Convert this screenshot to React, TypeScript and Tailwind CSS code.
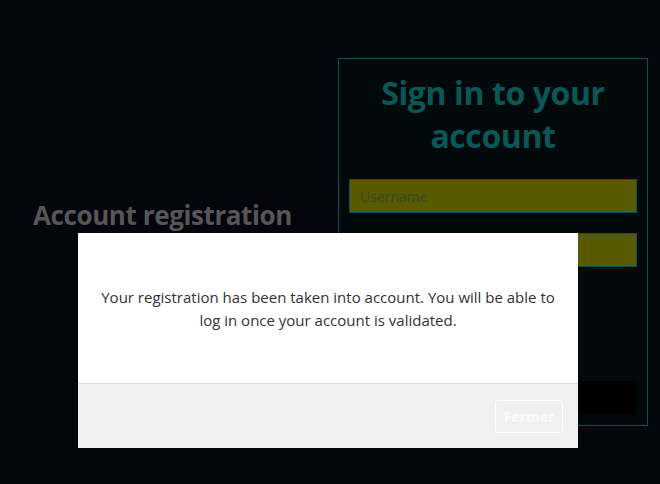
import React from "react";

export default function App() {
  const font = { fontFamily: '"Open Sans", "Noto Sans", sans-serif' };
  return (
    <div
      className="relative w-[660px] h-[484px] overflow-hidden bg-[#05050d] flex"
      style={font}
    >
      <div className="flex-1 pl-[33px] pt-[197px]">
        <h2 className="text-[26px] font-bold leading-[36px] text-[#565656] tracking-[-0.4px]">
          Account registration
        </h2>
      </div>
      <div className="mt-[58px] mr-[12px] w-[310px] h-[368px] border border-[#0e5256] bg-[#01090b] px-[10px] pt-[12px] flex flex-col">
        <h1 className="text-[32px] font-bold leading-[43px] text-center text-[#0b5757] tracking-[-0.4px]">
          Sign in to your account
        </h1>
        <div className="mt-[22px] h-[34px] border border-[#0e5256] bg-[#595900] flex items-center px-[10px] text-[14px] text-[#354826]">
          Username
        </div>
        <div className="mt-[20px] h-[34px] border border-[#0e5256] bg-[#595900]" />
        <div className="mt-[114px] h-[34px] rounded-[3px] bg-[#000000]" />
      </div>

      <div className="absolute left-[78px] top-[233px] w-[500px] h-[215px] bg-white flex flex-col">
        <div className="flex-1 flex items-center justify-center px-[20px] pt-[2px]">
          <p className="text-[15px] leading-[23px] text-[#333333] text-center">
            Your registration has been taken into account. You will be able to log in once your account is validated.
          </p>
        </div>
        <div className="h-[65px] border-t border-[#dcdcdc] bg-[#f0f0f0] flex items-center justify-end pr-[15px]">
          <div className="w-[68px] h-[33px] border border-white rounded-[3px] flex items-center justify-center text-[14px] font-bold text-[#fafafa]">
            Fermer
          </div>
        </div>
      </div>
    </div>
  );
}
